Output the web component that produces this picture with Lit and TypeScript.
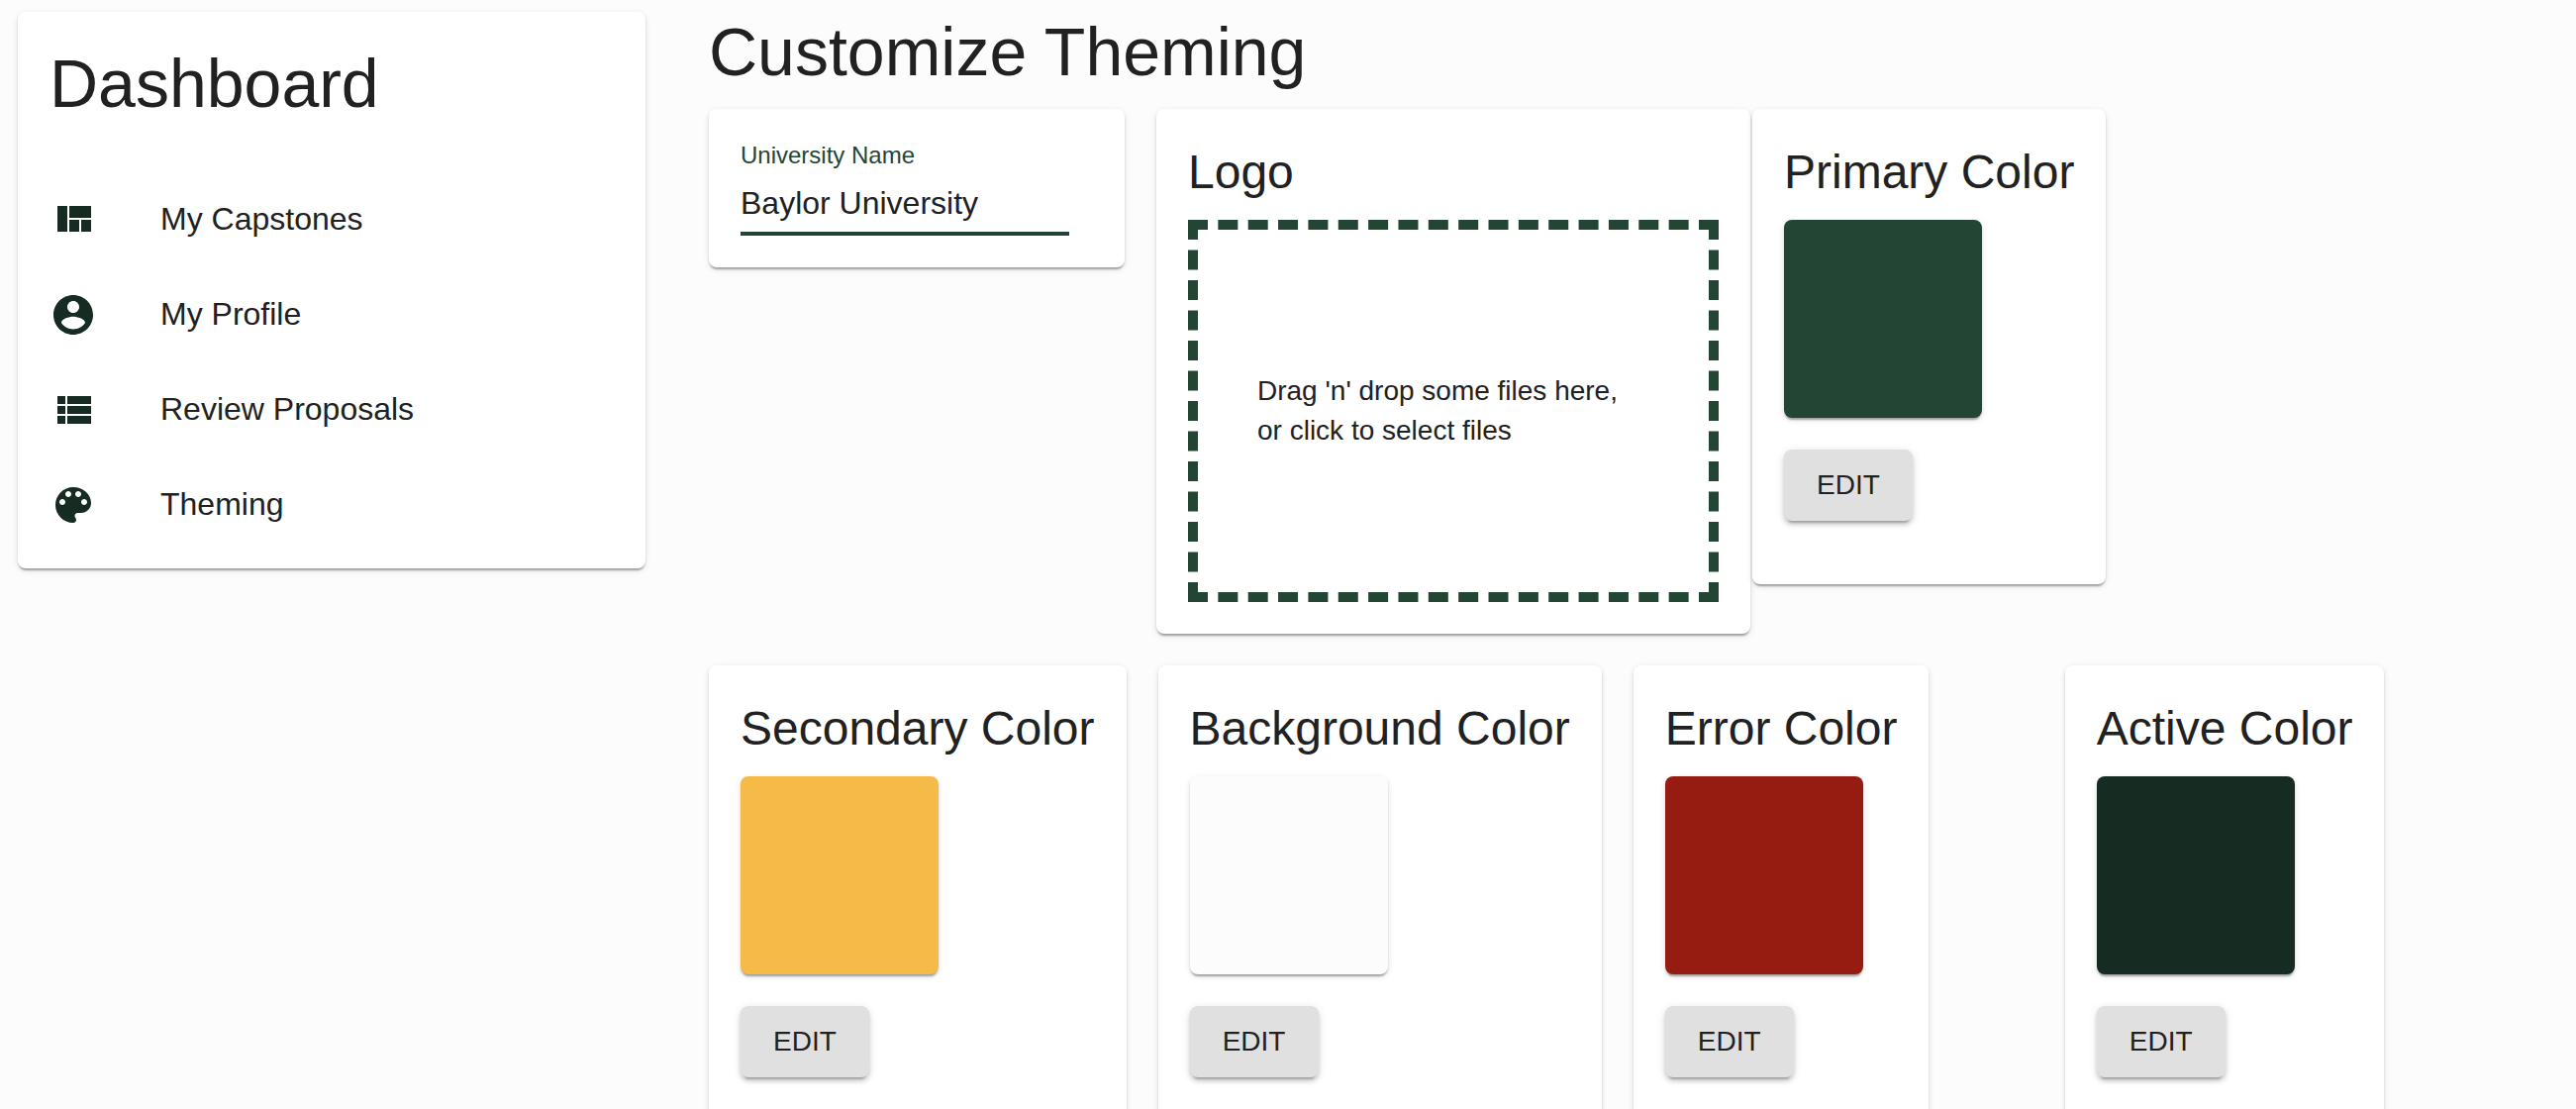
import { LitElement, html, css, svg } from "lit";
import { customElement, property, state } from "lit/decorators.js";
import { styleMap } from "lit/directives/style-map.js";

const icons = {
  quilt: svg`<path d="M10 18h5v-6h-5v6zm-6 0h5V5H4v13zm12 0h5v-6h-5v6zM10 5v6h11V5H10z"/>`,
  account: svg`<path d="M12 2C6.48 2 2 6.48 2 12s4.48 10 10 10 10-4.48 10-10S17.52 2 12 2zm0 3c1.66 0 3 1.34 3 3s-1.34 3-3 3-3-1.34-3-3 1.34-3 3-3zm0 14.2c-2.5 0-4.71-1.28-6-3.22.03-1.99 4-3.08 6-3.08 1.99 0 5.97 1.09 6 3.08-1.29 1.94-3.5 3.22-6 3.22z"/>`,
  list: svg`<path d="M4 14h4v-4H4v4zm0 5h4v-4H4v4zM4 9h4V5H4v4zm5 5h12v-4H9v4zm0 5h12v-4H9v4zM9 5v4h12V5H9z"/>`,
  palette: svg`<path d="M12 3c-4.97 0-9 4.03-9 9s4.03 9 9 9c.83 0 1.5-.67 1.5-1.5 0-.39-.15-.74-.39-1.01-.23-.26-.38-.61-.38-.99 0-.83.67-1.5 1.5-1.5H16c2.76 0 5-2.24 5-5 0-4.42-4.03-8-9-8zm-5.5 9c-.83 0-1.5-.67-1.5-1.5S5.67 9 6.5 9 8 9.67 8 10.5 7.33 12 6.5 12zm3-4C8.67 8 8 7.33 8 6.5S8.67 5 9.5 5s1.5.67 1.5 1.5S10.33 8 9.5 8zm5 0c-.83 0-1.5-.67-1.5-1.5S13.67 5 14.5 5s1.5.67 1.5 1.5S15.33 8 14.5 8zm3 4c-.83 0-1.5-.67-1.5-1.5S16.67 9 17.5 9s1.5.67 1.5 1.5-.67 1.5-1.5 1.5z"/>`,
};

const navItems = [
  { label: "My Capstones", icon: icons.quilt, href: "#capstones" },
  { label: "My Profile", icon: icons.account, href: "#profile" },
  { label: "Review Proposals", icon: icons.list, href: "#proposals" },
  { label: "Theming", icon: icons.palette, href: "#theming" },
];

const shared = css`
  * {
    box-sizing: border-box;
  }
  .card {
    background: #fff;
    border-radius: 8px;
    padding: 32px;
    box-shadow: 0 4px 2px -2px rgba(0, 0, 0, 0.2), 0 2px 2px rgba(0, 0, 0, 0.14),
      0 2px 6px rgba(0, 0, 0, 0.12);
  }
  .page-title {
    margin: 0;
    font-size: 68px;
    line-height: 84px;
    font-weight: 400;
  }
  .card-title {
    margin: 0 0 16px;
    font-size: 48px;
    line-height: 64px;
    font-weight: 400;
    white-space: nowrap;
  }
`;

@customElement("color-card")
export class ColorCard extends LitElement {
  static styles = [
    shared,
    css`
      :host {
        display: block;
      }
      .card {
        padding-bottom: 64px;
      }
      .swatch {
        width: 200px;
        height: 200px;
        border-radius: 8px;
        box-shadow: 0 4px 2px -2px rgba(0, 0, 0, 0.2), 0 2px 2px rgba(0, 0, 0, 0.14),
          0 2px 6px rgba(0, 0, 0, 0.12);
      }
      .edit {
        display: block;
        min-width: 130px;
        margin-top: 32px;
        padding: 12px 32px;
        border: 0;
        border-radius: 8px;
        background: #e0e0e0;
        color: inherit;
        font: inherit;
        font-size: 28px;
        line-height: 48px;
        text-transform: uppercase;
        cursor: pointer;
        box-shadow: 0 6px 2px -4px rgba(0, 0, 0, 0.2), 0 4px 4px rgba(0, 0, 0, 0.14),
          0 2px 10px rgba(0, 0, 0, 0.12);
      }
    `,
  ];

  @property() name = "";
  @property() color = "#fff";

  render() {
    return html`
      <section class="card">
        <h2 class="card-title">${this.name}</h2>
        <div class="swatch" style=${styleMap({ background: this.color })}></div>
        <button class="edit" type="button" aria-label="Edit ${this.name}">Edit</button>
      </section>
    `;
  }
}

@customElement("app-root")
export class AppRoot extends LitElement {
  static styles = [
    shared,
    css`
      :host {
        display: block;
        height: 100vh;
        overflow: auto;
        scrollbar-width: none;
        background: #fcfcfc;
        color: #212121;
        font-family: "Liberation Sans", Arial, sans-serif;
        font-size: 32px;
      }
      .shell {
        display: flex;
        align-items: flex-start;
        padding-left: 2px;
      }
      .sidebar {
        flex: 0 0 25%;
        padding: 12px 0 0 16px;
      }
      .sidebar .card {
        padding-top: 30px;
        padding-bottom: 16px;
      }
      .nav {
        list-style: none;
        margin: 48px 0 0;
        padding: 0;
      }
      .nav-link {
        display: flex;
        align-items: center;
        gap: 64px;
        height: 96px;
        color: inherit;
        text-decoration: none;
      }
      .nav-icon {
        width: 48px;
        height: 48px;
        fill: #162b22;
      }
      .nav-label {
        padding-bottom: 2px;
      }
      .main {
        flex: 1;
        min-width: 0;
        padding: 10px 142px 32px 64px;
      }
      .grid {
        display: flex;
        flex-wrap: wrap;
        align-items: flex-start;
        row-gap: 32px;
        margin-top: 16px;
      }
      .slot {
        padding-right: 32px;
      }
      .slot.tight {
        padding-right: 2px;
      }
      .slot.quarter {
        flex: 0 0 25%;
        display: flex;
      }
      .field {
        display: flex;
        flex-direction: column;
        width: 356px;
        padding: 3px 24px 0 0;
      }
      .field-label {
        font-size: 24px;
        line-height: 24px;
        color: #234634;
      }
      .field-input {
        width: 100%;
        height: 64px;
        margin-top: 5px;
        padding: 12px 0 10px;
        border: 0;
        border-bottom: 4px solid #234634;
        border-radius: 0;
        outline: 0;
        background: none;
        color: inherit;
        font: inherit;
      }
      .dropzone {
        display: flex;
        align-items: center;
        width: 536px;
        height: 386px;
        padding: 0 60px;
        border: 10px dashed #234634;
        font-size: 28px;
        line-height: 40px;
        cursor: pointer;
      }
    `,
  ];

  @state() private university = "Baylor University";

  private onName(e: Event) {
    this.university = (e.target as HTMLInputElement).value;
  }

  render() {
    return html`
      <div class="shell">
        <aside class="sidebar">
          <div class="card">
            <h1 class="page-title">Dashboard</h1>
            <ul class="nav">
              ${navItems.map(
                (item) => html`
                  <li>
                    <a class="nav-link" href=${item.href}>
                      <svg class="nav-icon" viewBox="0 0 24 24" aria-hidden="true">${item.icon}</svg>
                      <span class="nav-label">${item.label}</span>
                    </a>
                  </li>
                `
              )}
            </ul>
          </div>
        </aside>
        <main class="main">
          <h1 class="page-title">Customize Theming</h1>
          <div class="grid">
            <div class="slot">
              <div class="card">
                <div class="field">
                  <label class="field-label" for="university">University Name</label>
                  <input
                    class="field-input"
                    id="university"
                    type="text"
                    .value=${this.university}
                    @input=${this.onName}
                  />
                </div>
              </div>
            </div>
            <div class="slot tight">
              <section class="card">
                <h2 class="card-title">Logo</h2>
                <label class="dropzone">
                  <span>Drag 'n' drop some files here, or click to select files</span>
                  <input type="file" hidden />
                </label>
              </section>
            </div>
            <div class="slot"><color-card name="Primary Color" color="#234634"></color-card></div>
            <div class="slot"><color-card name="Secondary Color" color="#f6ba48"></color-card></div>
            <div class="slot"><color-card name="Background Color" color="#fcfcfc"></color-card></div>
            <div class="slot quarter"><color-card name="Error Color" color="#961c12"></color-card></div>
            <div class="slot"><color-card name="Active Color" color="#162b22"></color-card></div>
          </div>
        </main>
      </div>
    `;
  }
}
